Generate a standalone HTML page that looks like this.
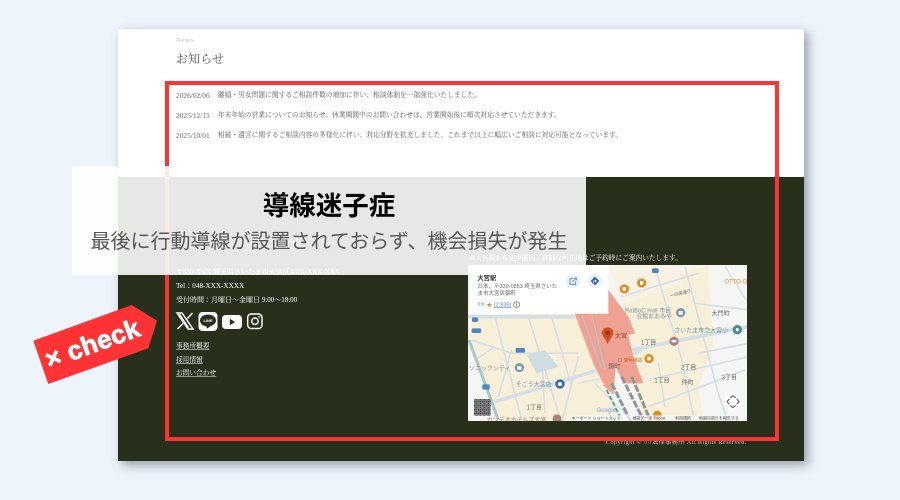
<!DOCTYPE html>
<html lang="ja"><head><meta charset="utf-8"><title>導線迷子症</title>
<style>
html,body{margin:0;padding:0;width:900px;height:500px;overflow:hidden;background:#edf4fc}
body{position:relative;font-family:"Liberation Serif","Noto Serif CJK SC",serif}
.a{position:absolute;white-space:nowrap}
.s{filter:blur(.25px)}
#page{position:absolute;left:118px;top:29px;width:686px;height:432px;background:#fff;box-shadow:4px 4px 10px rgba(40,50,60,.45)}
#dark{position:absolute;left:118px;top:177px;width:686px;height:284px;background:#28301b}
.n{font-size:6.600px;line-height:10px;color:#555;letter-spacing:.15px}
.d{font-size:7.400px;line-height:10px;color:#666}
.w{color:#fff;font-size:7px;line-height:10px}
.u{font-size:6.700px;text-decoration:underline;text-decoration-color:rgba(255,255,255,.5);text-underline-offset:1px}
#red{position:absolute;left:165px;top:81px;width:606px;height:352px;border:4px solid #ff3333}
#ov{position:absolute;left:72px;top:166px;width:514px;height:109px;background:rgba(255,255,255,.89)}
svg{position:absolute;left:0;top:0}
</style></head><body>
<div id="page"></div>
<div id="dark"></div>
<div class="a s" style="left:176px;top:37px;font-size:6.500px;line-height:8px;color:#bbb;letter-spacing:1px">News</div>
<div class="a s" style="left:176px;top:51px;font-size:12px;line-height:16px;color:#555;letter-spacing:.1px">お知らせ</div>
<div class="a d s" style="left:176px;top:91px">2026/02/06</div>
<div class="a n s" style="left:218px;top:91px">離婚・男女問題に関するご相談件数の増加に伴い、相談体制を一部強化いたしました。</div>
<div class="a d s" style="left:176px;top:111px">2025/12/15</div>
<div class="a n s" style="left:218px;top:111px">年末年始の営業についてのお知らせ。休業期間中のお問い合わせは、営業開始後に順次対応させていただきます。</div>
<div class="a d s" style="left:176px;top:131px">2025/10/01</div>
<div class="a n s" style="left:218px;top:131px">相続・遺言に関するご相談内容の多様化に伴い、対応分野を拡充しました。これまで以上に幅広いご相談に対応可能となっています。</div>

<div class="a w s" style="left:240px;top:238px;font-size:10px;line-height:12px">お問い合わせ</div>
<div class="a w s" style="left:176px;top:267px">〒330-XXX 埼玉県さいたま市大宮区XXX-XXX-XXX</div>
<div class="a w s" style="left:176px;top:281px;font-size:7.200px">Tel：048-XXX-XXXX</div>
<div class="a w s" style="left:176px;top:295px">受付時間：月曜日〜金曜日 9:00〜18:00</div>
<div class="a w u s" style="left:176px;top:342px">事務所概要</div>
<div class="a w u s" style="left:176px;top:356px">採用情報</div>
<div class="a w u s" style="left:176px;top:369px">お問い合わせ</div>
<div class="a w s" style="left:468px;top:254px;font-size:6.700px">JR大宮駅から徒歩圏内。詳細な所在地はご予約時にご案内いたします。</div>

<svg width="900" height="500" viewBox="0 0 900 500" style="filter:blur(.3px)">
<!-- social icons -->
<path d="M177 313h5l11 16h-5zM192.500 313l-6.500 7M184 322.500l-6.500 6.500M179.500 314.200l9 13.600" fill="none" stroke="#fff" stroke-width="1.400"/>
<rect x="198.500" y="312" width="19" height="19" rx="4" fill="#fff"/>
<path d="M208 314.500c-4.400 0-8 2.700-8 6 0 3 2.800 5.400 6.400 5.900l.4 2.300 4-2.600c3-1.100 5.200-3.100 5.200-5.600 0-3.300-3.600-6-8-6z" fill="#28301b"/>
<text x="208" y="322" text-anchor="middle" font-family="'Liberation Sans',sans-serif" font-size="4" font-weight="700" fill="#fff">LINE</text>
<rect x="222" y="315" width="20" height="14" rx="3.500" fill="#fff"/>
<path d="M229.800 318.800v6.400l5.400-3.200z" fill="#28301b"/>
<rect x="247.700" y="314" width="14.300" height="14.500" rx="3.500" fill="none" stroke="#fff" stroke-width="1.400"/>
<circle cx="255" cy="321.200" r="3.200" fill="none" stroke="#fff" stroke-width="1.400"/>
<circle cx="259.200" cy="316.800" r=".9" fill="#fff"/>

<clipPath id="m"><rect x="468" y="265" width="279" height="156"/></clipPath>
<g clip-path="url(#m)"><g transform="translate(465 260) scale(.33333)">
<rect x="0" y="0" width="870" height="495" fill="#f5f5f4"/>
<!-- beige blocks -->
<path d="M20 170L340 150 470 495 110 495 60 380 14 240z" fill="#f8efd9"/>
<path d="M470 60L730 20 745 260 700 380 715 495 540 495 480 260z" fill="#f8efd9"/>
<path d="M430 20L640 15 650 70 480 130z" fill="#f8f2e4"/>
<!-- roads -->
<g fill="none" stroke="#d3dee7" stroke-linecap="butt">
<path d="M0 170H330M500 270L850 200M90 425L400 330 530 270" stroke-width="11"/>
<path d="M570 20L650 300 690 490M660 20L760 400 790 490M90 170L170 480M190 170L290 490M260 170L320 380M340 290L290 490M470 110L700 40M690 130L850 150M700 280L850 250M550 360L850 290M550 440L840 330M20 240L140 280 340 280M140 270L100 410M230 290L240 460" stroke-width="5"/>
<path d="M390 370L500 480M580 310L600 440M30 300L90 260M340 370L440 350M780 20L850 130" stroke-width="4"/>
</g>
<path d="M12 240L100 480" stroke="#a8c6cc" stroke-width="9" fill="none"/>
<path d="M185 285L240 270 280 320 215 340z" fill="#cfdde0"/>
<!-- station -->
<path d="M325 150L430 90 490 170 510 220 490 225 505 290 535 370 475 370 452 320 445 405 420 380 385 310z" fill="#efa192"/>
<path d="M350 165L410 325" stroke="#a9cdd6" stroke-width="3" fill="none"/>
<path d="M380 160L420 330" stroke="#a9cdd6" stroke-width="3" fill="none"/>
<path d="M440 370L500 490M470 350L540 490M500 350L560 490" stroke="#8f9499" stroke-width="9" stroke-dasharray="22 5" fill="none"/>
<path d="M425 390L470 480" stroke="#3e9c94" stroke-width="5" stroke-dasharray="14 6" fill="none"/>
<!-- pin -->
<path d="M428 252c-6-16-17-25-17-33a17 17 0 0 1 34 0c0 8-11 17-17 33z" fill="#c8511d"/>
<circle cx="428" cy="219" r="6" fill="#a8201a"/>
<!-- POIs -->
<g fill="#fff"><path d="M464 96l14 14 14-14zM516 78l14 14 14-14zM538 305l14 14 14-14zM633 153l14 14 14-14zM803 218l14 14 14-14zM613 253l14 14 14-14zM149 332l14 14 14-14zM271 381l14 14 14-14z"/></g>
<g fill="#e08a1f"><circle cx="478" cy="87" r="14"/><circle cx="530" cy="69" r="14"/><circle cx="552" cy="296" r="14"/><circle cx="577" cy="465" r="13"/></g>
<g fill="#fff"><rect x="473" y="81" width="10" height="11"/><rect x="525" y="63" width="10" height="11"/><rect x="547" y="290" width="10" height="11"/></g>
<circle cx="647" cy="158" r="14" fill="#7f98aa"/><rect x="641" y="153" width="12" height="11" fill="#fff"/>
<circle cx="817" cy="209" r="14" fill="#4b8a85"/><circle cx="817" cy="209" r="5" fill="#fff"/>
<circle cx="627" cy="244" r="14" fill="#ac8078"/><rect x="620" y="240" width="14" height="7" fill="#fff"/>
<circle cx="163" cy="323" r="14" fill="#7f98aa"/><rect x="157" y="318" width="12" height="11" fill="#fff"/>
<circle cx="285" cy="372" r="14" fill="#2d66b8"/><rect x="279" y="367" width="12" height="11" fill="#fff"/>
<circle cx="276" cy="476" r="13" fill="#ac8078"/>
<!-- shields -->
<g fill="#4a86c2"><rect x="21" y="172" width="18" height="14" rx="4"/><rect x="20" y="205" width="28" height="14" rx="3"/><rect x="152" y="264" width="28" height="14" rx="3"/><rect x="561" y="25" width="20" height="14" rx="3"/><rect x="52" y="373" width="22" height="16" rx="3"/></g>
<!-- labels -->
<g font-family="'Liberation Sans','Noto Sans CJK JP',sans-serif" font-size="18" fill="#666">
<text x="778" y="70" fill="#d98a3a">OTTO O</text>
<text x="480" y="157" fill="#7c93a6">RaiBoC Hall 市民</text>
<text x="514" y="176" fill="#7c93a6">会館おおみや</text>
<text x="740" y="166">大門町</text>
<text x="628" y="217" fill="#5f8f8a">さいたま市立大宮小</text>
<text x="528" y="254">1丁目</text>
<text x="450" y="234" fill="#8f3a25">大宮</text>
<text x="458" y="304" font-size="14" fill="#c8661e">口 東料理店</text>
<text x="430" y="326">錦町</text>
<text x="648" y="328">2丁目</text>
<text x="568" y="368">1丁目</text>
<text x="650" y="373">仲町</text>
<text x="770" y="358">3丁目</text>
<text x="12" y="331" fill="#7c93a6">ソニックシティ</text>
<text x="152" y="380" fill="#6d90b8">そごう大宮店</text>
<text x="185" y="448">1丁目</text>
<text x="65" y="486" fill="#a07a72">カンデオホテルズ大宮</text>
<text x="395" y="456" fill="#7a9fd0">Google</text>
<text x="616" y="112" font-size="13" transform="rotate(-14 616 112)">一の宮通り</text>
</g>
<rect x="27" y="417" width="50" height="50" fill="#7a7a7a"/>
<path d="M27 425h50M27 437h50M27 449h50M27 460h50M34 417v50M46 417v50M58 417v50M70 417v50" stroke="#444" stroke-width="3" stroke-dasharray="3 3"/>
<rect x="320" y="466" width="530" height="20" fill="#f5f5f5" opacity=".75"/>
<g font-family="'Liberation Sans','Noto Sans CJK JP',sans-serif" font-size="12" fill="#444">
<text x="320" y="479">キーボード ショートカット</text>
<text x="502" y="479">地図データ ©2026</text>
<text x="630" y="479">利用規約</text>
<text x="702" y="479">地図の誤りを報告する</text>
</g>
<circle cx="804" cy="425" r="26" fill="#fff"/>
<path d="M796 414l8-7 8 7M796 436l8 7 8-7M793 417l-7 8 7 8M815 417l7 8-7 8" fill="none" stroke="#555" stroke-width="3"/>
<!-- info card -->
<rect x="15" y="15" width="415" height="146" fill="#fff"/>
<g font-family="'Liberation Sans','Noto Sans CJK JP',sans-serif">
<text x="37" y="60" font-size="19" font-weight="700" fill="#333">大宮駅</text>
<text x="38" y="84" font-size="16.500" fill="#666">日本、〒330-0853 埼玉県さいた</text>
<text x="38" y="105" font-size="16.500" fill="#666">ま市大宮区錦町</text>
<text x="37" y="137" font-size="14" fill="#666">3.9</text>
<text x="64" y="141" font-size="18" fill="#e88a2e">★</text>
<text x="87" y="139" font-size="16.500" fill="#4d7fbf" text-decoration="underline">(2,939)</text>
</g>
<circle cx="155" cy="134" r="9" fill="none" stroke="#666" stroke-width="2"/><rect x="154" y="130" width="2" height="9" fill="#666"/>
<circle cx="324" cy="63" r="22" fill="#eef1f4"/>
<path d="M324 56h-9v17h17v-9M322 66l12-12M327 54h7v7" fill="none" stroke="#3f7fd0" stroke-width="2.500"/>
<circle cx="390" cy="63" r="22" fill="#eef1f4"/>
<path d="M390 50l13 13-13 13-13-13z" fill="#2b62a8"/>
<path d="M385 68v-5h8M390 59l4 4-4 4" fill="none" stroke="#fff" stroke-width="2"/>
</g></g>
<text x="606" y="444" font-family="'Liberation Serif',serif" font-size="6.200" fill="#bbb" letter-spacing=".4">Copyright © ○○法律事務所 All Rights Reserved.</text>
</svg>
<div id="red"></div>
<div id="ov"></div>
<div class="a s" style="left:72px;top:189px;width:514px;text-align:center;font:700 26.500px/34px 'Liberation Sans','Noto Sans CJK JP',sans-serif;color:#000">導線迷子症</div>
<div class="a s" style="left:72px;top:229px;width:514px;text-align:center;font:400 20px/27px 'Liberation Sans','Noto Sans CJK JP',sans-serif;color:#555;letter-spacing:0">最後に行動導線が設置されておらず、機会損失が発生</div>
<svg width="900" height="500" viewBox="0 0 900 500">
<path d="M33.300 340.700L131.700 305 157 320.700 148.300 348.300 48.300 384z" fill="#ff3333"/>
<text x="0" y="0" transform="translate(49 369) rotate(-20)" font-family="'Liberation Sans',sans-serif" font-weight="700" font-size="26" letter-spacing=".4" fill="#fff" stroke="#fff" stroke-width=".9">× check</text>
</svg>
</body></html>
